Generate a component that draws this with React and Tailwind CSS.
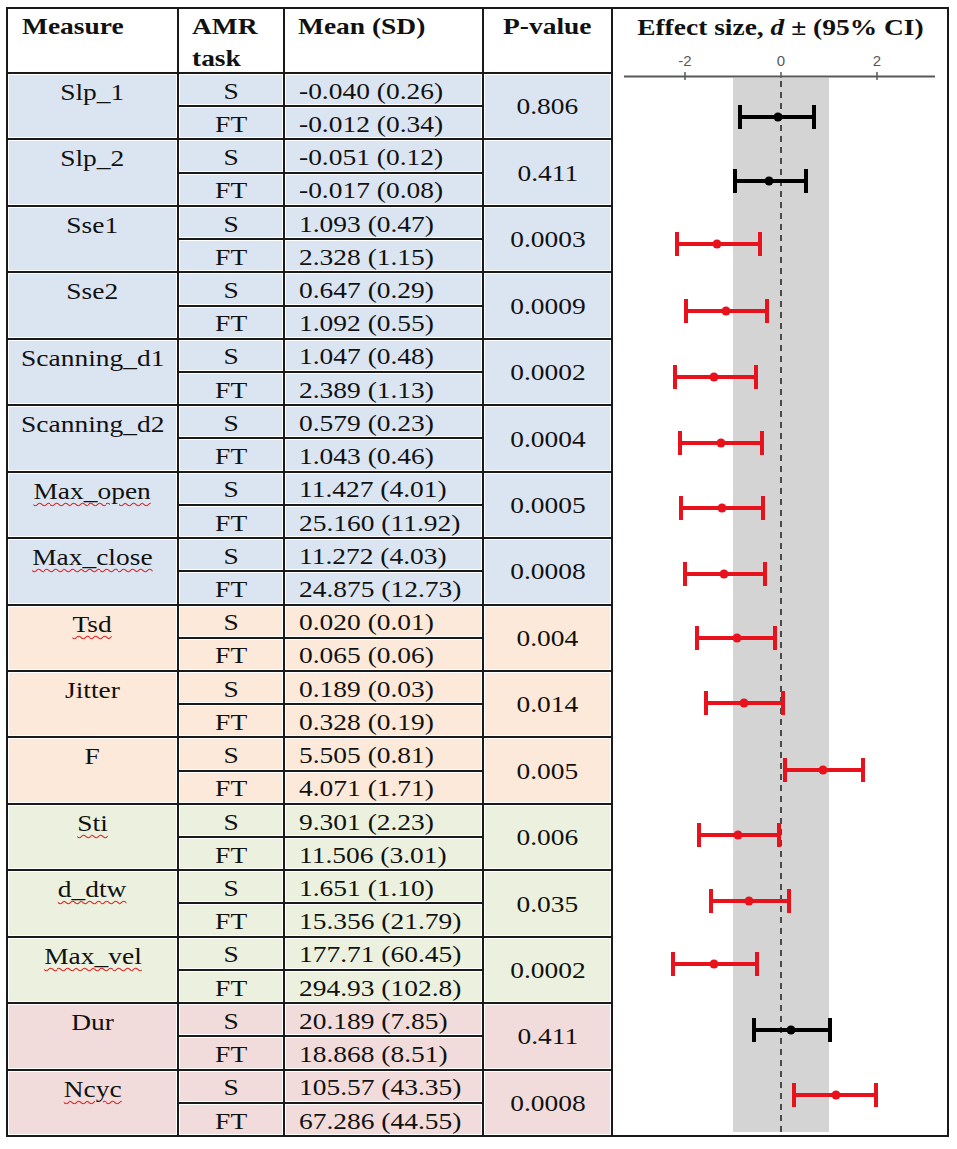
import React from "react";

const COLORS = {
  blue: "bg-[#dbe5f1]",
  peach: "bg-[#fde9d9]",
  green: "bg-[#ebf1de]",
  pink: "bg-[#f2dcdb]",
};

// x / y are in chart (svg) coordinates
const rows = [
  { name: "Slp_1", s: "-0.040 (0.26)", ft: "-0.012 (0.34)", p: "0.806", c: "blue", bar: [127, 201, 165, 66], sig: false },
  { name: "Slp_2", s: "-0.051 (0.12)", ft: "-0.017 (0.08)", p: "0.411", c: "blue", bar: [122, 193, 156, 130], sig: false },
  { name: "Sse1", s: "1.093 (0.47)", ft: "2.328 (1.15)", p: "0.0003", c: "blue", bar: [64, 147, 104, 193], sig: true },
  { name: "Sse2", s: "0.647 (0.29)", ft: "1.092 (0.55)", p: "0.0009", c: "blue", bar: [73, 154, 113, 260], sig: true },
  { name: "Scanning_d1", s: "1.047 (0.48)", ft: "2.389 (1.13)", p: "0.0002", c: "blue", bar: [62, 143, 101, 326], sig: true },
  { name: "Scanning_d2", s: "0.579 (0.23)", ft: "1.043 (0.46)", p: "0.0004", c: "blue", bar: [67, 149, 108, 392], sig: true },
  { name: "Max_open", s: "11.427 (4.01)", ft: "25.160 (11.92)", p: "0.0005", c: "blue", bar: [68, 150, 109, 457], sig: true, wavy: true },
  { name: "Max_close", s: "11.272 (4.03)", ft: "24.875 (12.73)", p: "0.0008", c: "blue", bar: [72, 152, 111, 523], sig: true, wavy: true },
  { name: "Tsd", s: "0.020 (0.01)", ft: "0.065 (0.06)", p: "0.004", c: "peach", bar: [84, 162, 124, 587], sig: true, wavy: true },
  { name: "Jitter", s: "0.189 (0.03)", ft: "0.328 (0.19)", p: "0.014", c: "peach", bar: [93, 170, 131, 652], sig: true },
  { name: "F", s: "5.505 (0.81)", ft: "4.071 (1.71)", p: "0.005", c: "peach", bar: [172, 250, 210, 719], sig: true },
  { name: "Sti", s: "9.301 (2.23)", ft: "11.506 (3.01)", p: "0.006", c: "green", bar: [86, 166, 125, 784], sig: true, wavy: true },
  { name: "d_dtw", s: "1.651 (1.10)", ft: "15.356 (21.79)", p: "0.035", c: "green", bar: [98, 176, 136, 850], sig: true, wavy: true },
  { name: "Max_vel", s: "177.71 (60.45)", ft: "294.93 (102.8)", p: "0.0002", c: "green", bar: [60, 144, 101, 913], sig: true, wavy: true },
  { name: "Dur", s: "20.189 (7.85)", ft: "18.868 (8.51)", p: "0.411", c: "pink", bar: [141, 217, 178, 979], sig: false },
  { name: "Ncyc", s: "105.57 (43.35)", ft: "67.286 (44.55)", p: "0.0008", c: "pink", bar: [181, 263, 223, 1044], sig: true, wavy: true },
];

const T = ({ children, left }) => (
  <span
    className={`inline-block whitespace-nowrap scale-x-[1.22] ${left ? "origin-left" : ""}`}
  >
    {children}
  </span>
);

const cell = "shadow-[inset_0_0_0_1px_#fff]";

const Chart = () => (
  <svg width="334" height="1084" className="block">
    {[
      [72, "-2"],
      [168, "0"],
      [264, "2"],
    ].map(([x, l]) => (
      <g key={l}>
        <text
          x={x}
          y={15}
          textAnchor="middle"
          fontSize="15"
          fill="#595959"
          fontFamily="'Liberation Sans', Arial, sans-serif"
        >
          {l}
        </text>
        <line x1={x} x2={x} y1={21} y2={29} stroke="#595959" strokeWidth="1.5" />
      </g>
    ))}
    <line x1={11} x2={322} y1={25.5} y2={25.5} stroke="#595959" strokeWidth="2" />
    <rect x={120} y={27} width={96} height={1054} fill="#d4d4d4" />
    <line
      x1={168}
      x2={168}
      y1={30}
      y2={1081}
      stroke="#4a4a4a"
      strokeWidth="2"
      strokeDasharray="6 5"
    />
    {rows.map((r) => {
      const [lo, hi, mid, y] = r.bar;
      const col = r.sig ? "#e8121c" : "#000";
      return (
        <g key={r.name} stroke={col} strokeWidth="4">
          <line x1={lo} x2={hi} y1={y} y2={y} />
          <line x1={lo} x2={lo} y1={y - 12} y2={y + 12} />
          <line x1={hi} x2={hi} y1={y - 12} y2={y + 12} />
          <circle cx={mid} cy={y} r="4.5" fill={col} stroke="none" />
        </g>
      );
    })}
  </svg>
);

export default function App() {
  return (
    <div className="w-[957px] h-[1149px] bg-white pt-[7px] pl-[6px] font-['Liberation_Serif','Times_New_Roman',serif] text-[22.5px] text-[#111]">
      <div className="grid w-[943px] grid-cols-[169px_104px_197px_127px_334px] grid-rows-[63px_repeat(32,31.22px)] gap-[2px] p-[2px] bg-[#1a1a1a]">
        {/* header */}
        <div className="bg-white pl-[14px] pt-[2px] leading-[32px] font-bold">
          <T left>Measure</T>
        </div>
        <div className="bg-white pl-[13px] pt-[2px] leading-[32px] font-bold">
          <div><T left>AMR</T></div>
          <div><T left>task</T></div>
        </div>
        <div className="bg-white pl-[13px] pt-[2px] leading-[32px] font-bold">
          <T left>Mean (SD)</T>
        </div>
        <div className="bg-white pt-[2px] leading-[32px] font-bold text-center">
          <T>P-value</T>
        </div>

        {/* effect size column */}
        <div className="col-start-5 row-span-full bg-white">
          <div className="h-[42px] pt-[3px] leading-[32px] font-bold text-center">
            <T>
              Effect size, <i>d</i> ± (95% CI)
            </T>
          </div>
          <Chart />
        </div>

        {rows.map((r) => {
          const bg = `${COLORS[r.c]} ${cell}`;
          return (
            <React.Fragment key={r.name}>
              <div className={`${bg} row-span-2 text-center pt-[3px] leading-[31px]`}>
                <T>
                  <span
                    className={
                      r.wavy
                        ? "underline decoration-wavy decoration-[#e0201f] decoration-1 underline-offset-[3px]"
                        : ""
                    }
                  >
                    {r.name}
                  </span>
                </T>
              </div>
              <div className={`${bg} flex items-center justify-center pt-[4px]`}>
                <T>S</T>
              </div>
              <div className={`${bg} flex items-center pl-[14px] pt-[4px]`}>
                <T left>{r.s}</T>
              </div>
              <div className={`${bg} row-span-2 flex items-center justify-center pt-[2px]`}>
                <T>{r.p}</T>
              </div>
              <div className={`${bg} flex items-center justify-center pt-[4px]`}>
                <T>FT</T>
              </div>
              <div className={`${bg} flex items-center pl-[14px] pt-[4px]`}>
                <T left>{r.ft}</T>
              </div>
            </React.Fragment>
          );
        })}
      </div>
    </div>
  );
}
